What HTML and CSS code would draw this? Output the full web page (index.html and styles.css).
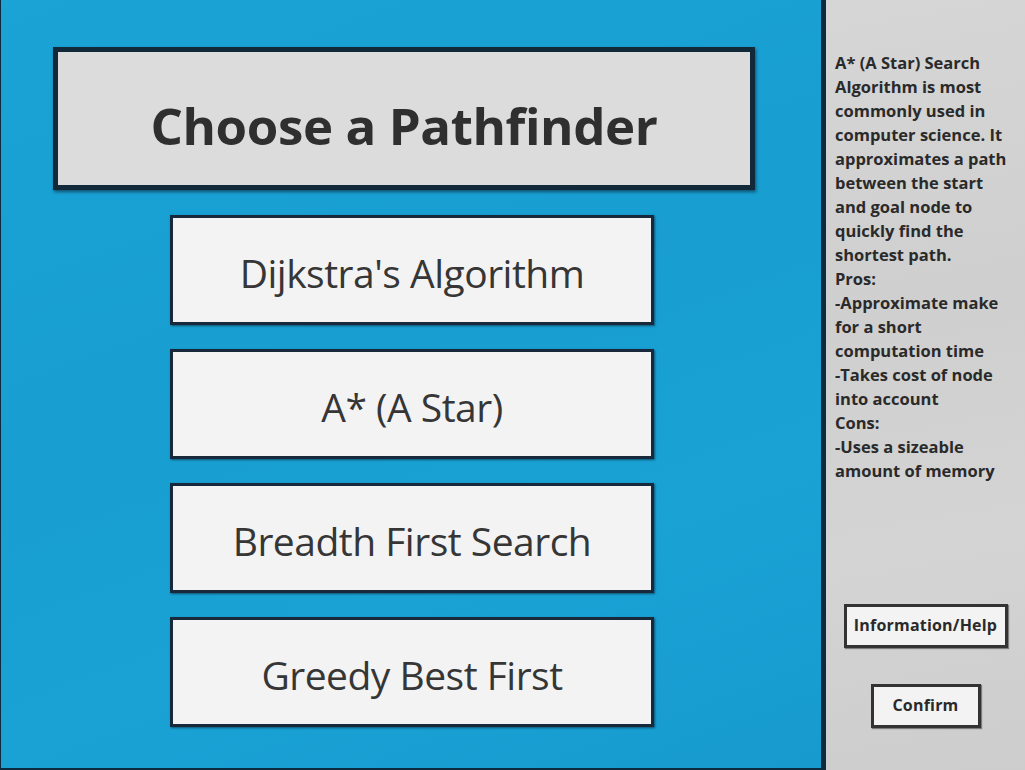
FILE: index.html
```html
<!DOCTYPE html>
<html lang="en">
<head>
<meta charset="utf-8">
<title>Choose a Pathfinder</title>
<link rel="stylesheet" href="styles.css">
</head>
<body>
<div class="app">
  <main class="stage">
    <div class="title-box"><h1 class="title">Choose a Pathfinder</h1></div>
    <div class="choices">
      <button class="choice">Dijkstra's Algorithm</button>
      <button class="choice">A* (A Star)</button>
      <button class="choice">Breadth First Search</button>
      <button class="choice">Greedy Best First</button>
    </div>
  </main>
  <aside class="side">
    <p class="desc">A* (A Star) Search<br>Algorithm is most<br>commonly used in<br>computer science. It<br>approximates a path<br>between the start<br>and goal node to<br>quickly find the<br>shortest path.<br>Pros:<br>-Approximate make<br>for a short<br>computation time<br>-Takes cost of node<br>into account<br>Cons:<br>-Uses a sizeable<br>amount of memory</p>
    <div class="side-actions">
      <button class="side-btn help">Information/Help</button>
      <button class="side-btn confirm">Confirm</button>
    </div>
  </aside>
</div>
</body>
</html>
```
FILE: styles.css
```css
html, body {
  margin: 0;
  padding: 0;
  width: 1025px;
  height: 770px;
  overflow: hidden;
}
body {
  font-family: "Open Sans", "Noto Sans", sans-serif;
  background: #19a0d3;
}
.app {
  display: flex;
  width: 1025px;
  height: 770px;
}
.stage {
  width: 821px;
  height: 770px;
  border-left: 1px solid #0d2b3e;
  border-bottom: 2px solid #0d2b3e;
  background: linear-gradient(160deg, #1ba3d6 0%, #189ed1 45%, #1aa2d5 70%, #179bcf 100%);
  display: flex;
  flex-direction: column;
  align-items: flex-start;
  padding-top: 47px;
  box-sizing: border-box;
}
.title-box {
  margin-left: 52px;
  width: 702px;
  height: 143px;
  box-sizing: border-box;
  border: 5px solid #12293a;
  box-shadow: 1px 2px 3px rgba(8, 30, 45, 0.6);
  background: #dcdcdc;
  display: flex;
  align-items: center;
  justify-content: center;
}
.title {
  margin: 0;
  font-size: 51px;
  font-weight: 700;
  color: #2f2f2f;
  letter-spacing: -0.4px;
  padding-top: 12px;
}
.choices {
  margin-top: 25px;
  margin-left: 169px;
  display: flex;
  flex-direction: column;
  gap: 24px;
}
.choice {
  width: 484px;
  height: 110px;
  box-sizing: border-box;
  border: 3px solid #17293a;
  box-shadow: 1px 1px 2px rgba(8, 30, 45, 0.6);
  background: #f3f3f3;
  font-family: "Open Sans", "Noto Sans", sans-serif;
  font-size: 39px;
  font-weight: 400;
  color: #363636;
  letter-spacing: -0.5px;
  padding: 5px 0 0;
  margin: 0;
}
.side {
  flex: 1;
  border-left: 5px solid #0d2b3e;
  background: linear-gradient(170deg, #d6d6d6 0%, #cfcfcf 40%, #d4d4d4 70%, #cdcdcd 100%);
  display: flex;
  flex-direction: column;
  padding: 51px 0 42px 9px;
  box-sizing: border-box;
  height: 770px;
}
.desc {
  margin: 0;
  font-size: 16.5px;
  line-height: 24px;
  font-weight: 700;
  color: #2a2a2a;
  letter-spacing: 0;
}
.side-actions {
  margin-top: auto;
  display: flex;
  flex-direction: column;
  align-items: center;
  gap: 36px;
  margin-left: -9px;
}
.side-btn {
  height: 44px;
  box-sizing: border-box;
  border: 3px solid #333;
  box-shadow: 1px 1px 1px rgba(0, 0, 0, 0.4);
  background: #f3f3f3;
  font-family: "Open Sans", "Noto Sans", sans-serif;
  font-size: 16px;
  font-weight: 700;
  color: #2a2a2a;
  padding: 0 0 2px;
  margin: 0;
  letter-spacing: 0.2px;
}
.help {
  width: 164px;
}
.confirm {
  width: 110px;
}
```
